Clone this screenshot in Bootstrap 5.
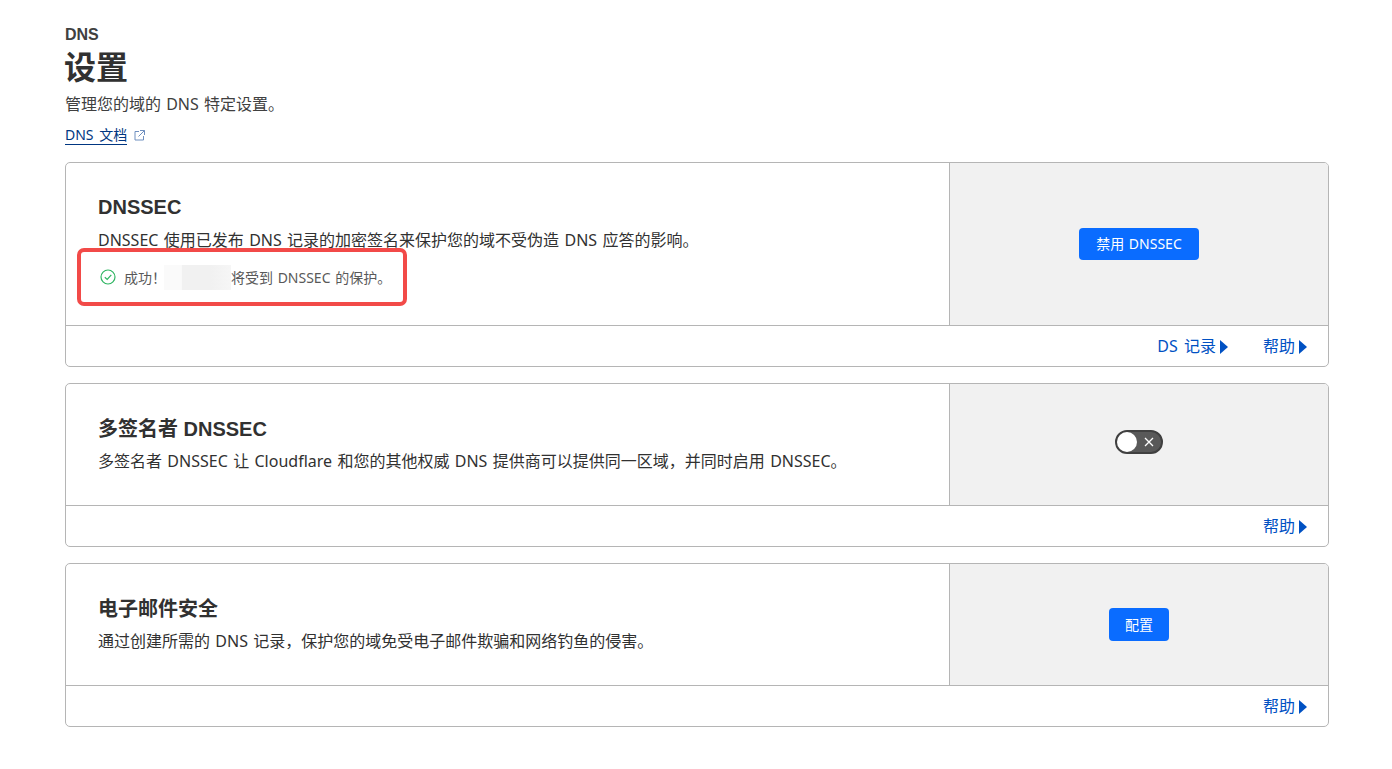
<!DOCTYPE html>
<html lang="zh">
<head>
<meta charset="utf-8">
<title>DNS 设置</title>
<link href="https://cdn.jsdelivr.net/npm/bootstrap@5.3.0/dist/css/bootstrap.min.css" rel="stylesheet">
<style>
html,body{height:769px;overflow:hidden}
body{background:#fff;color:#313131;font-family:"Noto Sans","Noto Sans CJK SC",sans-serif;font-size:16px}
.page-wrap{padding:25px 63px 0 65px}
.crumb{font-family:"Liberation Sans","Noto Sans CJK SC",sans-serif;font-size:16px;font-weight:700;line-height:20px;color:#404040}
.page-title{font-family:"Liberation Sans","Noto Sans CJK SC",sans-serif;font-size:32px;font-weight:700;line-height:40px;margin:3px 0 5px -1px;color:#313131}
.page-desc{font-size:16px;line-height:22px;margin:0 0 10px;color:#404040;word-spacing:1px}
.doc-row{height:37px;line-height:18px}
.doc-link{font-size:14px;line-height:18px;color:#003681;text-decoration:none;border-bottom:1px solid #003681;display:inline-block;word-spacing:2px}
.ext-icon{margin-left:7px;vertical-align:-1px}
.cf-card{border:1px solid #b5b5b5;border-radius:5px;margin-bottom:16px;overflow:hidden;background:#fff}
.cf-main{flex:1 1 auto;padding:31px 32px 0}
.cf-side{flex:0 0 379px;width:379px;background:#f1f1f1;border-left:1px solid #b5b5b5}
.cf-top-a{height:162px}
.cf-top-b{height:121px}
.cf-top-b .cf-main{padding-top:32px}
.cf-top-b .cf-title{margin-bottom:7px}
.cf-foot{height:41px;border-top:1px solid #b5b5b5;padding-right:21px;gap:35px}
.cf-title{font-family:"Liberation Sans","Noto Sans CJK SC",sans-serif;font-size:20px;font-weight:700;line-height:26px;margin:0 0 8px;color:#313131}
.cf-text{font-size:16px;line-height:24px;margin:0;color:#313131;word-spacing:1.2px}
.cf-foot a{font-size:16px;color:#0051c3;text-decoration:none;line-height:20px;word-spacing:2px}
.tri{display:inline-block;width:0;height:0;border-left:8px solid #0051c3;border-top:7px solid transparent;border-bottom:7px solid transparent;margin-left:4px;vertical-align:-2px}
.btn-cf{background:#0a6cff;color:#fff;border:0;border-radius:4px;font-size:14px;padding:0 17px;height:32px;line-height:32px;word-spacing:1px}
.btn-cf:hover{background:#0a6cff;color:#fff}
.btn-cfg{height:33px;line-height:33px;padding:0 16px}
.notice-box{border:4px solid #f24a48;border-radius:7px;width:330px;height:58px;margin:-4px 0 0 -21px;padding-left:19px;font-size:14px;color:#595959;display:flex;align-items:center;background:#fff;white-space:nowrap;word-spacing:1px}
.notice-box svg{margin-right:8px;flex:none}
.blur-block{width:67px;height:25px;background:linear-gradient(90deg,#fafafa 0,#fafafa 26%,#f1f1f1 27%,#f1f1f1 70%,#f6f6f6 100%);margin:0 0 0 -2px;flex:none}
.toggle-pill{width:48px;height:24px;background:#595959;border:2px solid #404040;border-radius:12px;position:relative;display:block;margin-bottom:5px}
.toggle-knob{position:absolute;left:0;top:0;width:20px;height:20px;border-radius:50%;background:#fff}
.toggle-x{position:absolute;right:6px;top:4px}
</style>
</head>
<body>
<div class="page-wrap">
  <div class="crumb">DNS</div>
  <h1 class="page-title">设置</h1>
  <p class="page-desc">管理您的域的 DNS 特定设置。</p>
  <div class="doc-row">
    <a class="doc-link" href="#">DNS 文档</a><svg class="ext-icon" width="11" height="11" viewBox="0 0 11 11" fill="none" stroke="#6f8fbf" stroke-width="1"><path d="M5 1.500H1v8.500h8.500V6"/><path d="M6 .5h4.500V5M10.500 .5 4.500 6.500"/></svg>
  </div>

  <div class="cf-card">
    <div class="d-flex cf-top-a">
      <div class="cf-main">
        <h2 class="cf-title">DNSSEC</h2>
        <p class="cf-text">DNSSEC 使用已发布 DNS 记录的加密签名来保护您的域不受伪造 DNS 应答的影响。</p>
        <div class="notice-box">
          <svg width="16" height="16" viewBox="0 0 16 16" fill="none" stroke="#2fb562" stroke-width="1.200"><circle cx="8" cy="8" r="7"/><path d="M4.800 8.200 7.200 10.500 11.300 5.800"/></svg>
          <span>成功！</span><span class="blur-block"></span><span>将受到 DNSSEC 的保护。</span>
        </div>
      </div>
      <div class="cf-side d-flex align-items-center justify-content-center"><button class="btn btn-cf" type="button">禁用 DNSSEC</button></div>
    </div>
    <div class="cf-foot d-flex align-items-center justify-content-end">
      <a href="#">DS 记录<span class="tri"></span></a>
      <a href="#">帮助<span class="tri"></span></a>
    </div>
  </div>

  <div class="cf-card">
    <div class="d-flex cf-top-b">
      <div class="cf-main">
        <h2 class="cf-title">多签名者 DNSSEC</h2>
        <p class="cf-text">多签名者 DNSSEC 让 Cloudflare 和您的其他权威 DNS 提供商可以提供同一区域，并同时启用 DNSSEC。</p>
      </div>
      <div class="cf-side d-flex align-items-center justify-content-center">
        <span class="toggle-pill"><span class="toggle-knob"></span><svg class="toggle-x" width="12" height="12" viewBox="0 0 12 12" stroke="#fff" stroke-width="1.300"><path d="M2 2l8 8M10 2l-8 8"/></svg></span>
      </div>
    </div>
    <div class="cf-foot d-flex align-items-center justify-content-end"><a href="#">帮助<span class="tri"></span></a></div>
  </div>

  <div class="cf-card">
    <div class="d-flex cf-top-b">
      <div class="cf-main">
        <h2 class="cf-title">电子邮件安全</h2>
        <p class="cf-text">通过创建所需的 DNS 记录，保护您的域免受电子邮件欺骗和网络钓鱼的侵害。</p>
      </div>
      <div class="cf-side d-flex align-items-center justify-content-center"><button class="btn btn-cf btn-cfg" type="button">配置</button></div>
    </div>
    <div class="cf-foot d-flex align-items-center justify-content-end"><a href="#">帮助<span class="tri"></span></a></div>
  </div>
</div>
</body>
</html>
